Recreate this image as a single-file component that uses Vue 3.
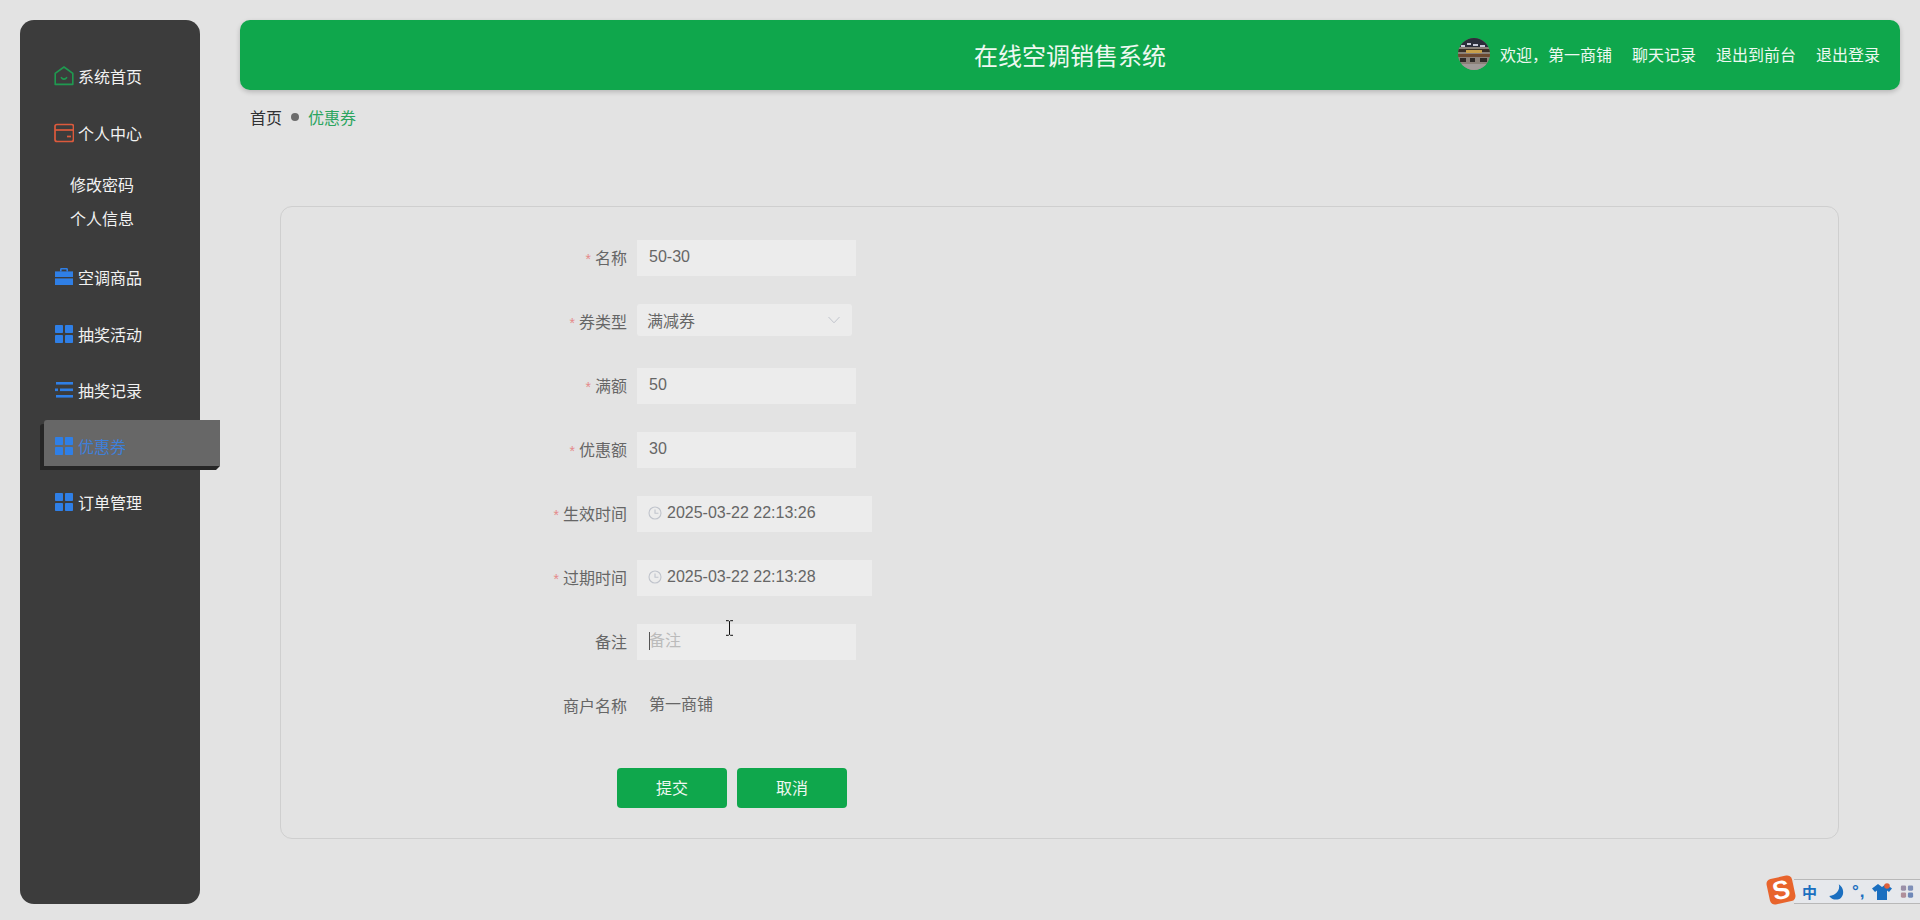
<script setup>
import { ref } from "vue";

const menus = [
  { name: "系统首页", icon: "house" },
  { name: "个人中心", icon: "wallet", children: ["修改密码", "个人信息"] },
  { name: "空调商品", icon: "case" },
  { name: "抽奖活动", icon: "grid" },
  { name: "抽奖记录", icon: "list" },
  { name: "优惠券", icon: "grid", active: true },
  { name: "订单管理", icon: "grid" },
];

const links = ["聊天记录", "退出到前台", "退出登录"];

const form = ref({
  name: "50-30",
  type: "满减券",
  full: "50",
  off: "30",
  start: "2025-03-22 22:13:26",
  end: "2025-03-22 22:13:28",
  note: "",
});
</script>

<template>
  <div class="page">
    <aside class="sidebar">
      <template v-for="m in menus" :key="m.name">
        <div class="menu-item" :class="{ active: m.active }">
          <svg class="menu-icon" viewBox="0 0 20 20">
            <g v-if="m.icon === 'house'" fill="none" stroke="#1f9a50" stroke-width="1.6" stroke-linejoin="round" stroke-linecap="round">
              <path d="M10 1 18.800 7.400V18.400H1.200V7.400Z" />
              <path d="M7.400 11.600c1.200 2 4 2 5.200 0" />
            </g>
            <g v-else-if="m.icon === 'wallet'" fill="none" stroke="#dc5a3c" stroke-width="1.700">
              <rect x="1" y="1.500" width="18.500" height="17" rx="2" />
              <path d="M1 7H19.500" />
              <path d="M13 13.500H17" />
            </g>
            <g v-else-if="m.icon === 'case'" fill="#2f7fe6">
              <path d="M6 4.400V2.400C6 1.600 6.600 1 7.400 1h5.200C13.400 1 14 1.600 14 2.400V4.400H12.400V2.600H7.600V4.400Z" />
              <path d="M1 4.400H19V10H1Z" />
              <path d="M1 11.400H19V18H1Z" />
            </g>
            <g v-else-if="m.icon === 'grid'" fill="#2f7fe6">
              <rect x="1" y="1" width="8" height="8" rx="0.800" />
              <rect x="11" y="1" width="8" height="8" rx="0.800" />
              <rect x="1" y="11" width="8" height="8" rx="0.800" />
              <rect x="11" y="11" width="8" height="8" rx="0.800" />
            </g>
            <g v-else fill="#2f7fe6">
              <rect x="2" y="2" width="17" height="2.600" />
              <rect x="1" y="8.500" width="3" height="2.600" />
              <rect x="6" y="8.500" width="13" height="2.600" />
              <rect x="2" y="15" width="17" height="2.600" />
            </g>
          </svg>
          <span>{{ m.name }}</span>
        </div>
        <div v-if="m.children" class="submenu">
          <div v-for="c in m.children" :key="c" class="sub-item">{{ c }}</div>
        </div>
      </template>
    </aside>

    <main class="main">
      <header class="header">
        <span></span>
        <div class="title">在线空调销售系统</div>
        <div class="user">
          <svg class="avatar" viewBox="0 0 32 32">
            <rect width="32" height="32" fill="#8a8078" />
            <rect width="32" height="9" fill="#2c2d3a" />
            <path d="M3 7h4v2H3zM9 5h4v2H9zM15 6h5v2h-5zM22 7h5v2h-5z" fill="#c9c9d8" />
            <rect y="11" width="32" height="3" fill="#3a3028" />
            <rect x="8" y="12" width="16" height="3" fill="#c9a04a" />
            <rect y="16" width="32" height="3" fill="#6e4a30" />
            <path d="M2 20h6v4H2zM12 20h5v4h-5zM22 20h7v4h-7z" fill="#2e2a28" />
            <rect y="26" width="32" height="6" fill="#a09a98" />
          </svg>
          <span class="welcome">欢迎，第一商铺</span>
          <a v-for="l in links" :key="l" class="link">{{ l }}</a>
        </div>
      </header>

      <div class="crumb">
        <span class="crumb-home">首页</span>
        <i class="crumb-dot"></i>
        <span class="crumb-now">优惠券</span>
      </div>

      <section class="card">
        <div class="row">
          <label class="label"><em>*</em>名称</label>
          <input v-model="form.name" class="input" type="text" />
        </div>
        <div class="row">
          <label class="label"><em>*</em>券类型</label>
          <div class="select">
            <span>{{ form.type }}</span>
            <svg class="chevron" viewBox="0 0 12 8">
              <path d="M.5 1 6 6.800 11.500 1" fill="none" stroke="#c0c4cc" stroke-width="1" />
            </svg>
          </div>
        </div>
        <div class="row">
          <label class="label"><em>*</em>满额</label>
          <input v-model="form.full" class="input" type="text" />
        </div>
        <div class="row">
          <label class="label"><em>*</em>优惠额</label>
          <input v-model="form.off" class="input" type="text" />
        </div>
        <div class="row">
          <label class="label"><em>*</em>生效时间</label>
          <div class="date">
            <svg class="clock" viewBox="0 0 14 14">
              <circle cx="7" cy="7" r="6" fill="none" stroke="#c0c4cc" stroke-width="1.100" />
              <path d="M7 3.400V7.300H10.400" fill="none" stroke="#c0c4cc" stroke-width="1.100" />
            </svg>
            <span>{{ form.start }}</span>
          </div>
        </div>
        <div class="row">
          <label class="label"><em>*</em>过期时间</label>
          <div class="date">
            <svg class="clock" viewBox="0 0 14 14">
              <circle cx="7" cy="7" r="6" fill="none" stroke="#c0c4cc" stroke-width="1.100" />
              <path d="M7 3.400V7.300H10.400" fill="none" stroke="#c0c4cc" stroke-width="1.100" />
            </svg>
            <span>{{ form.end }}</span>
          </div>
        </div>
        <div class="row">
          <label class="label">备注</label>
          <div class="note-wrap">
            <input v-model="form.note" class="input" type="text" placeholder="备注" />
            <i class="caret"></i>
            <svg class="ibeam" viewBox="0 0 9 16">
              <path d="M1 .7H3.500L4.500 1.500 5.500 .7H8M4.500 1.500V14.500M1 15.300H3.500L4.500 14.500 5.500 15.300H8" fill="none" stroke="#111" stroke-width="1" />
            </svg>
          </div>
        </div>
        <div class="row">
          <label class="label">商户名称</label>
          <div class="plain">第一商铺</div>
        </div>
        <div class="actions">
          <button class="btn" type="button">提交</button>
          <button class="btn" type="button">取消</button>
        </div>
      </section>
    </main>

    <div class="ime">
      <div class="ime-logo">S</div>
      <div class="ime-bar">
        <span class="ime-zh">中</span>
        <svg class="ime-moon" viewBox="0 0 16 16">
          <path d="M10.500 1C12 6 8 11 2 11.500 4 15 9.500 16 12.500 13 15.500 10 15 4 10.500 1Z" fill="#1b6fc0" />
        </svg>
        <span class="ime-punc">°,</span>
        <svg class="ime-shirt" viewBox="0 0 20 18">
          <path d="M6 1 0 5.500 3 9 5 7.500V17H15V7.500L17 9 20 5.500 14 1 10 4Z" fill="#1b6fc0" />
          <circle cx="15" cy="3" r="2.800" fill="#e0603a" />
        </svg>
        <svg class="ime-apps" viewBox="0 0 16 16">
          <rect x="1" y="1" width="6" height="6" rx="1.500" fill="#9a8fa8" />
          <rect x="9" y="1" width="6" height="6" rx="1.500" fill="#7f8fb8" />
          <rect x="1" y="9" width="6" height="6" rx="1.500" fill="#b08f9a" />
          <rect x="9" y="9" width="6" height="6" rx="1.500" fill="#6f88b8" />
        </svg>
      </div>
    </div>
  </div>
</template>

<style>
html,
body {
  margin: 0;
  background: #e3e3e3;
}
</style>

<style scoped>
.page {
  position: relative;
  display: flex;
  box-sizing: border-box;
  height: 920px;
  padding: 20px 20px 16px;
  overflow: hidden;
  background: #e3e3e3;
  font-family: "Liberation Sans", "Noto Sans CJK SC", sans-serif;
  font-size: 16px;
  color: #666;
}

.sidebar {
  flex: none;
  box-sizing: border-box;
  width: 180px;
  padding-top: 28.500px;
  background: #3c3c3c;
  border-radius: 14px;
}

.menu-item {
  display: flex;
  align-items: center;
  box-sizing: border-box;
  height: 50px;
  padding: 4px 0 0 34px;
  margin-bottom: 6.600px;
  color: #f2f2f2;
}

.menu-item:first-child {
  margin-bottom: 7.600px;
}

.menu-item.active {
  position: relative;
  width: 176px;
  height: 46px;
  margin: 3px 0 8.600px 24px;
  padding: 6px 0 0 10px;
  background: #676767;
  border-radius: 3px 0 0 0;
  box-shadow: -4px 4px 0 #262626;
  color: #3f7fd8;
}

.menu-item.active::after {
  content: "";
  position: absolute;
  right: 0;
  bottom: -4px;
  border-top: 4px solid #262626;
  border-right: 4px solid transparent;
}

.menu-icon {
  flex: none;
  width: 20px;
  height: 20px;
  margin-right: 4px;
}

.submenu {
  padding: 6px 0 13.500px;
}

.sub-item {
  height: 34px;
  padding-left: 50px;
  line-height: 34px;
  color: #f2f2f2;
}

.main {
  flex: none;
  width: 1660px;
  margin-left: 40px;
}

.header {
  display: grid;
  grid-template-columns: 1fr auto 1fr;
  align-items: center;
  box-sizing: border-box;
  height: 70px;
  padding-bottom: 2px;
  background: #0fa74c;
  border-radius: 10px;
  box-shadow: 0 2px 5px rgba(0, 0, 0, 0.2);
  color: #eef8f1;
}

.title {
  font-size: 24px;
}

.user {
  display: flex;
  align-items: center;
  justify-content: flex-end;
  padding-right: 20px;
}

.avatar {
  flex: none;
  width: 32px;
  height: 32px;
  margin-right: 10px;
  border-radius: 50%;
}

.link {
  margin-left: 20px;
}

.crumb {
  display: flex;
  align-items: center;
  box-sizing: border-box;
  height: 46px;
  padding: 8px 0 0 10px;
}

.crumb-home {
  color: #303133;
}

.crumb-dot {
  width: 8px;
  height: 8px;
  margin: 0 9px;
  background: #6c6c6c;
  border-radius: 50%;
}

.crumb-now {
  color: #2ba55f;
}

.card {
  box-sizing: border-box;
  width: 1559px;
  height: 633px;
  margin: 70px 0 0 40px;
  padding: 33px 0 0 226px;
  border: 1px solid #cfcfcf;
  border-radius: 12px;
}

.row {
  display: flex;
  height: 40px;
  margin-bottom: 24px;
}

.label {
  width: 120px;
  margin-right: 10px;
  line-height: 38px;
  text-align: right;
  color: #666;
}

.label em {
  margin-right: 4px;
  font-style: normal;
  font-size: 14px;
  color: #e58a8a;
}

.input {
  box-sizing: border-box;
  width: 219px;
  height: 36px;
  padding: 0 12px 2px;
  border: none;
  outline: none;
  background: #ececec;
  font: inherit;
  color: #666;
}

.input::placeholder {
  color: #bbb;
}

.select {
  display: flex;
  align-items: center;
  justify-content: space-between;
  box-sizing: border-box;
  width: 215px;
  height: 32px;
  padding: 0 12px 0 10px;
  background: #ececec;
  border-radius: 3px;
  color: #666;
}

.chevron {
  width: 12px;
  height: 8px;
}

.date {
  display: flex;
  align-items: center;
  box-sizing: border-box;
  width: 235px;
  height: 36px;
  padding: 0 0 2px 11px;
  background: #ececec;
  color: #666;
}

.clock {
  flex: none;
  width: 14px;
  height: 14px;
  margin-right: 5px;
}

.note-wrap {
  position: relative;
  height: 36px;
}

.caret {
  position: absolute;
  left: 12px;
  top: 8px;
  width: 1px;
  height: 18px;
  background: #555;
}

.ibeam {
  position: absolute;
  left: 88px;
  top: -4px;
  width: 9px;
  height: 16px;
}

.plain {
  padding-left: 12px;
  line-height: 34px;
  color: #666;
}

.actions {
  display: flex;
  gap: 10px;
  margin: 40px 0 0 110px;
}

.btn {
  width: 110px;
  height: 40px;
  padding: 0 0 2px;
  border: none;
  border-radius: 4px;
  background: #0fa74c;
  font: inherit;
  color: #eef8f1;
}

.ime {
  position: absolute;
  right: 0;
  bottom: 16px;
  display: flex;
  align-items: flex-end;
}

.ime-logo {
  position: relative;
  z-index: 1;
  width: 26px;
  height: 26px;
  margin-bottom: 1px;
  background: #e8642c;
  border-radius: 5px;
  transform: rotate(-12deg);
  font-size: 26px;
  font-weight: 700;
  line-height: 26px;
  text-align: center;
  color: #fff;
}

.ime-bar {
  display: flex;
  align-items: center;
  box-sizing: border-box;
  width: 126px;
  height: 25px;
  padding-left: 8px;
  background: #e6e8ec;
  border-top: 1px solid #b8b8b8;
  border-bottom: 1px solid #b8b8b8;
}

.ime-zh {
  width: 16px;
  font-size: 15px;
  font-weight: 700;
  color: #1b6fc0;
}

.ime-moon {
  width: 18px;
  height: 18px;
  margin-left: 9px;
}

.ime-punc {
  width: 20px;
  margin-left: 7px;
  font-size: 17px;
  font-weight: 700;
  line-height: 16px;
  letter-spacing: 1px;
  color: #1b6fc0;
}

.ime-shirt {
  width: 20px;
  height: 18px;
}

.ime-apps {
  width: 14px;
  height: 15px;
  margin-left: 8px;
}
</style>
